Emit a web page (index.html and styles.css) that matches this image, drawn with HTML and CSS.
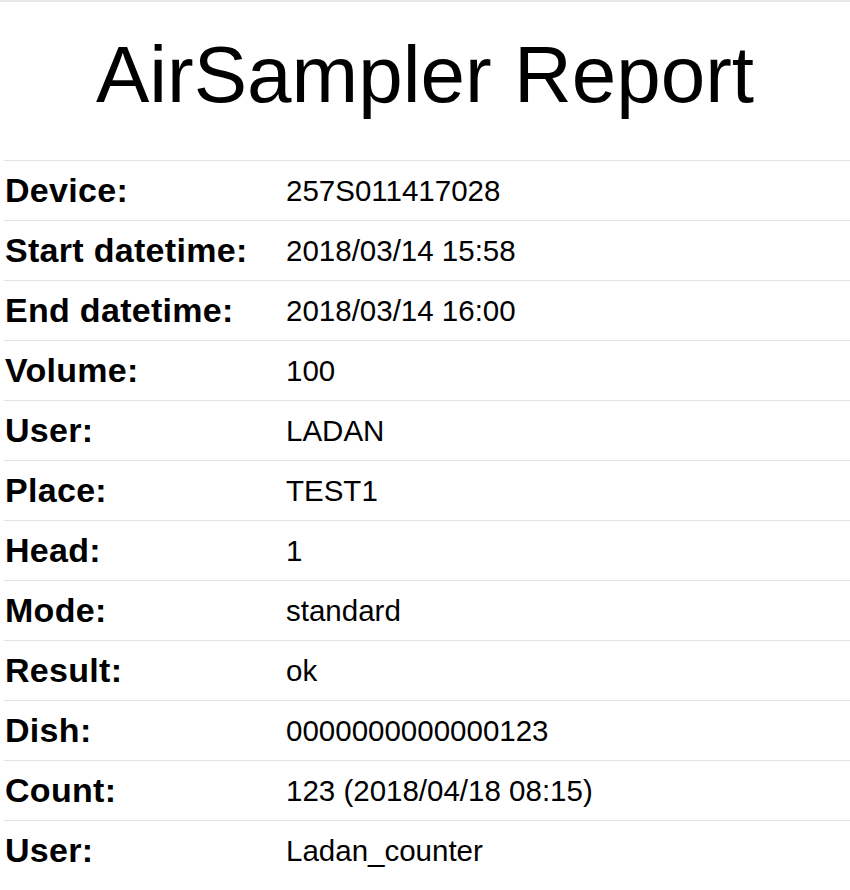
FILE: index.html
```html
<!DOCTYPE html>
<html>
<head>
<meta charset="utf-8">
<link rel="stylesheet" href="styles.css">
</head>
<body>
<div class="page">
  <h1 class="title">AirSampler Report</h1>
  <div class="report">
    <div class="row"><div class="label">Device:</div><div class="value">257S011417028</div></div>
    <div class="row"><div class="label">Start datetime:</div><div class="value">2018/03/14 15:58</div></div>
    <div class="row"><div class="label">End datetime:</div><div class="value">2018/03/14 16:00</div></div>
    <div class="row"><div class="label">Volume:</div><div class="value">100</div></div>
    <div class="row"><div class="label">User:</div><div class="value">LADAN</div></div>
    <div class="row"><div class="label">Place:</div><div class="value">TEST1</div></div>
    <div class="row"><div class="label">Head:</div><div class="value">1</div></div>
    <div class="row"><div class="label">Mode:</div><div class="value">standard</div></div>
    <div class="row"><div class="label">Result:</div><div class="value">ok</div></div>
    <div class="row"><div class="label">Dish:</div><div class="value">0000000000000123</div></div>
    <div class="row"><div class="label">Count:</div><div class="value">123 (2018/04/18 08:15)</div></div>
    <div class="row"><div class="label">User:</div><div class="value">Ladan_counter</div></div>
  </div>
</div>
</body>
</html>
```
FILE: styles.css
```css
html, body {
  margin: 0;
  padding: 0;
  background: #ffffff;
}
body {
  font-family: "Liberation Sans", Arial, sans-serif;
  color: #000000;
}
.page {
  border-top: 2px solid #e8e8e8;
}
.title {
  margin: 0;
  padding: 33px 0 45px;
  text-align: center;
  font-size: 80px;
  font-weight: normal;
  line-height: 80px;
}
.report {
  margin-left: 4px;
}
.row {
  display: grid;
  grid-template-columns: 282px 1fr;
  align-items: center;
  height: 60px;
  border-top: 1px solid #e3e3e3;
  box-sizing: border-box;
}
.label {
  font-weight: bold;
  font-size: 34px;
  letter-spacing: 0.3px;
  padding-left: 1px;
}
.value {
  font-size: 29.5px;
}
```
